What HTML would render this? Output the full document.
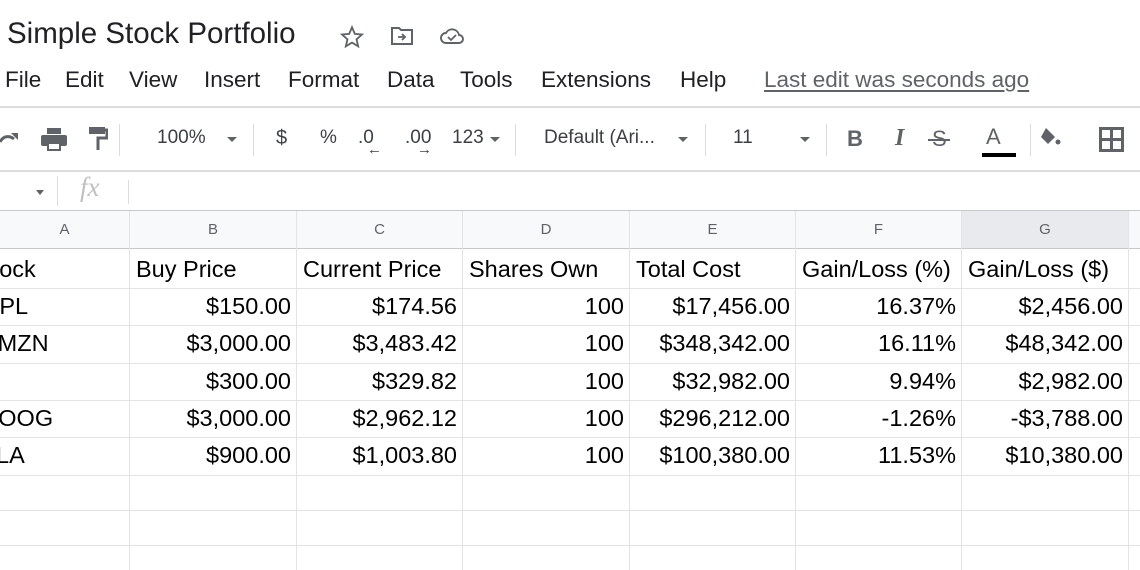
<!DOCTYPE html>
<html><head><meta charset="utf-8"><style>
*{margin:0;padding:0;box-sizing:border-box}
body{width:1140px;height:570px;overflow:hidden;background:#fff;font-family:"Liberation Sans",Arial,sans-serif;position:relative;color:#202124}
.a{position:absolute;white-space:nowrap}
.m{font-size:22.5px;top:67px;color:#202124}
.tb{font-size:19px;color:#3c4043;top:127px}
.sep{position:absolute;width:1px;background:#dadce0}
.hl{position:absolute;left:0;width:1140px;height:1px;background:#e2e3e3}
.vl{position:absolute;top:211px;height:359px;width:1px;background:#e2e3e3}
.ch{position:absolute;top:211px;height:38px;background:#f8f9fa;border-right:1px solid #c7c7c7;border-bottom:1px solid #c7c7c7;color:#5f6368;font-size:15px;text-align:center;line-height:38px}
.c{position:absolute;font-size:23.5px;color:#000;height:37px;line-height:37px;white-space:nowrap;overflow:hidden}
.r{text-align:right;padding-right:5px}
.l{padding-left:6px}
.dd{position:absolute;width:0;height:0;border-left:5px solid transparent;border-right:5px solid transparent;border-top:5px solid #5f6368}
</style></head><body>
<div class="a" style="left:7px;top:17px;font-size:29.5px;color:#202124">Simple Stock Portfolio</div>
<svg class="a" style="left:339px;top:24px" width="26" height="26" viewBox="0 0 24 24"><path d="M12 3l2.6 6.1 6.6.6-5 4.4 1.5 6.5L12 17.2 6.3 20.6l1.5-6.5-5-4.4 6.6-.6z" fill="none" stroke="#5f6368" stroke-width="1.7"/></svg>
<svg class="a" style="left:390px;top:25px" width="24" height="22" viewBox="0 0 24 22"><path d="M2 3h7l2 2h11v14H2z" fill="none" stroke="#5f6368" stroke-width="2"/><path d="M8 12h7M12 9l3 3-3 3" fill="none" stroke="#5f6368" stroke-width="1.8"/></svg>
<svg class="a" style="left:439px;top:25px" width="26" height="22" viewBox="0 0 26 22"><path d="M7 18h13a4 4 0 0 0 0-8 7 7 0 0 0-13-2 5 5 0 0 0 0 10z" fill="none" stroke="#5f6368" stroke-width="1.9"/><path d="M9 12l3 3 5-5" fill="none" stroke="#5f6368" stroke-width="1.8"/></svg>

<div class="a m" style="left:5px">File</div>
<div class="a m" style="left:65px">Edit</div>
<div class="a m" style="left:129px">View</div>
<div class="a m" style="left:204px">Insert</div>
<div class="a m" style="left:288px">Format</div>
<div class="a m" style="left:387px">Data</div>
<div class="a m" style="left:460px">Tools</div>
<div class="a m" style="left:541px">Extensions</div>
<div class="a m" style="left:680px">Help</div>
<div class="a m" style="left:764px;color:#5f6368;text-decoration:underline;text-underline-offset:3px">Last edit was seconds ago</div>

<div class="hl" style="top:106px;background:#dadce0;height:2px"></div>
<!-- toolbar -->
<svg class="a" style="left:0;top:130px" width="20" height="18" viewBox="0 0 20 18"><path d="M0 12c3-6 9-7 14-3" fill="none" stroke="#5f6368" stroke-width="3"/><path d="M11 3h7v7z" fill="#5f6368"/></svg>
<svg class="a" style="left:40px;top:127px" width="28" height="25" viewBox="0 0 28 25"><rect x="7" y="1" width="14" height="6" fill="#5f6368"/><rect x="1" y="8" width="26" height="11" rx="2" fill="#5f6368"/><rect x="7" y="15" width="14" height="9" fill="#5f6368"/><rect x="9" y="17" width="10" height="5" fill="#fff"/></svg>
<svg class="a" style="left:88px;top:126px" width="20" height="26" viewBox="0 0 20 26"><rect x="1" y="1" width="16" height="7" fill="#5f6368"/><path d="M17 4h2v8H10v12" fill="none" stroke="#5f6368" stroke-width="3"/></svg>
<div class="sep" style="left:119px;top:124px;height:32px"></div>
<div class="a tb" style="left:157px">100%</div><div class="dd" style="left:227px;top:137px"></div>
<div class="sep" style="left:253px;top:124px;height:32px"></div>
<div class="a tb" style="left:276px;font-size:20px">$</div>
<div class="a tb" style="left:320px">%</div>
<div class="a tb" style="left:358px">.0</div><div class="a" style="left:367px;top:141px;font-size:15px;color:#3c4043;font-weight:bold">←</div>
<div class="a tb" style="left:405px">.00</div><div class="a" style="left:417px;top:141px;font-size:15px;color:#3c4043;font-weight:bold">→</div>
<div class="a tb" style="left:452px">123</div><div class="dd" style="left:490px;top:137px"></div>
<div class="sep" style="left:515px;top:124px;height:32px"></div>
<div class="a tb" style="left:544px">Default (Ari...</div><div class="dd" style="left:678px;top:137px"></div>
<div class="sep" style="left:705px;top:124px;height:32px"></div>
<div class="a tb" style="left:733px">11</div><div class="dd" style="left:800px;top:137px"></div>
<div class="sep" style="left:826px;top:124px;height:32px"></div>
<div class="a" style="left:847px;top:126px;font-size:22px;font-weight:bold;color:#5f6368">B</div>
<div class="a" style="left:895px;top:125px;font-size:24px;font-style:italic;font-family:'Liberation Serif',serif;font-weight:bold;color:#5f6368">I</div>
<div class="a" style="left:932px;top:126px;font-size:22px;color:#5f6368">S</div><div class="a" style="left:928px;top:139px;width:22px;height:2px;background:#5f6368"></div>
<div class="a" style="left:986px;top:124px;font-size:22px;color:#5f6368">A</div>
<div class="a" style="left:982px;top:153px;width:34px;height:4px;background:#000"></div>
<div class="sep" style="left:1030px;top:124px;height:32px"></div>
<svg class="a" style="left:1040px;top:126px" width="36" height="24" viewBox="0 0 36 24"><path d="M6 2l9 9-7 7-7-7z" fill="#5f6368"/><circle cx="18" cy="16" r="2.5" fill="#5f6368"/></svg>
<svg class="a" style="left:1099px;top:127px" width="25" height="25" viewBox="0 0 25 25"><rect x="1.5" y="1.5" width="22" height="22" fill="none" stroke="#5f6368" stroke-width="3"/><path d="M12.5 1v23M1 12.5h23" stroke="#5f6368" stroke-width="3"/></svg>

<div class="hl" style="top:170px;background:#dadce0;height:2px"></div>
<!-- formula bar -->
<div class="dd" style="left:36px;top:190px;border-width:5px 4px 0"></div>
<div class="sep" style="left:57px;top:176px;height:30px"></div>
<div class="a" style="left:80px;top:172px;font-size:27px;font-style:italic;font-family:'Liberation Serif',serif;color:#c0c0c0">fx</div>
<div class="sep" style="left:128px;top:180px;height:24px"></div>

<!-- column headers -->
<div class="ch" style="left:0;width:130px">A</div>
<div class="ch" style="left:130px;width:167px">B</div>
<div class="ch" style="left:297px;width:166px">C</div>
<div class="ch" style="left:463px;width:167px">D</div>
<div class="ch" style="left:630px;width:166px">E</div>
<div class="ch" style="left:796px;width:166px">F</div>
<div class="ch" style="left:962px;width:167px;background:#e8eaed">G</div>
<div class="ch" style="left:1129px;width:20px;border-right:none"></div>
<div class="hl" style="top:210px;background:#c7c7c7"></div>

<div class="vl" style="left:129px"></div><div class="vl" style="left:296px"></div><div class="vl" style="left:462px"></div><div class="vl" style="left:629px"></div><div class="vl" style="left:795px"></div><div class="vl" style="left:961px"></div><div class="vl" style="left:1128px"></div>
<div class="hl" style="top:288px"></div><div class="hl" style="top:325px"></div><div class="hl" style="top:363px"></div><div class="hl" style="top:400px"></div><div class="hl" style="top:437px"></div><div class="hl" style="top:475px"></div><div class="hl" style="top:510px"></div><div class="hl" style="top:545px"></div>

<div class="c" style="left:-23px;top:251px">Stock</div>
<div class="c l" style="left:130px;top:251px">Buy Price</div>
<div class="c l" style="left:297px;top:251px">Current Price</div>
<div class="c l" style="left:463px;top:251px">Shares Own</div>
<div class="c l" style="left:630px;top:251px">Total Cost</div>
<div class="c l" style="left:796px;top:251px">Gain/Loss (%)</div>
<div class="c l" style="left:962px;top:251px">Gain/Loss ($)</div>

<div class="c" style="left:-32px;top:288px">AAPL</div>
<div class="c" style="left:-18px;top:325px">AMZN</div>
<div class="c" style="left:-30px;top:363px">FB</div>
<div class="c" style="left:-20px;top:400px">GOOG</div>
<div class="c" style="left:-34px;top:437px">TSLA</div>

<div class="c r" style="left:130px;width:166px;top:288px">$150.00</div>
<div class="c r" style="left:130px;width:166px;top:325px">$3,000.00</div>
<div class="c r" style="left:130px;width:166px;top:363px">$300.00</div>
<div class="c r" style="left:130px;width:166px;top:400px">$3,000.00</div>
<div class="c r" style="left:130px;width:166px;top:437px">$900.00</div>

<div class="c r" style="left:297px;width:165px;top:288px">$174.56</div>
<div class="c r" style="left:297px;width:165px;top:325px">$3,483.42</div>
<div class="c r" style="left:297px;width:165px;top:363px">$329.82</div>
<div class="c r" style="left:297px;width:165px;top:400px">$2,962.12</div>
<div class="c r" style="left:297px;width:165px;top:437px">$1,003.80</div>

<div class="c r" style="left:463px;width:166px;top:288px">100</div>
<div class="c r" style="left:463px;width:166px;top:325px">100</div>
<div class="c r" style="left:463px;width:166px;top:363px">100</div>
<div class="c r" style="left:463px;width:166px;top:400px">100</div>
<div class="c r" style="left:463px;width:166px;top:437px">100</div>

<div class="c r" style="left:630px;width:165px;top:288px">$17,456.00</div>
<div class="c r" style="left:630px;width:165px;top:325px">$348,342.00</div>
<div class="c r" style="left:630px;width:165px;top:363px">$32,982.00</div>
<div class="c r" style="left:630px;width:165px;top:400px">$296,212.00</div>
<div class="c r" style="left:630px;width:165px;top:437px">$100,380.00</div>

<div class="c r" style="left:796px;width:165px;top:288px">16.37%</div>
<div class="c r" style="left:796px;width:165px;top:325px">16.11%</div>
<div class="c r" style="left:796px;width:165px;top:363px">9.94%</div>
<div class="c r" style="left:796px;width:165px;top:400px">-1.26%</div>
<div class="c r" style="left:796px;width:165px;top:437px">11.53%</div>

<div class="c r" style="left:962px;width:166px;top:288px">$2,456.00</div>
<div class="c r" style="left:962px;width:166px;top:325px">$48,342.00</div>
<div class="c r" style="left:962px;width:166px;top:363px">$2,982.00</div>
<div class="c r" style="left:962px;width:166px;top:400px">-$3,788.00</div>
<div class="c r" style="left:962px;width:166px;top:437px">$10,380.00</div>
</body></html>
